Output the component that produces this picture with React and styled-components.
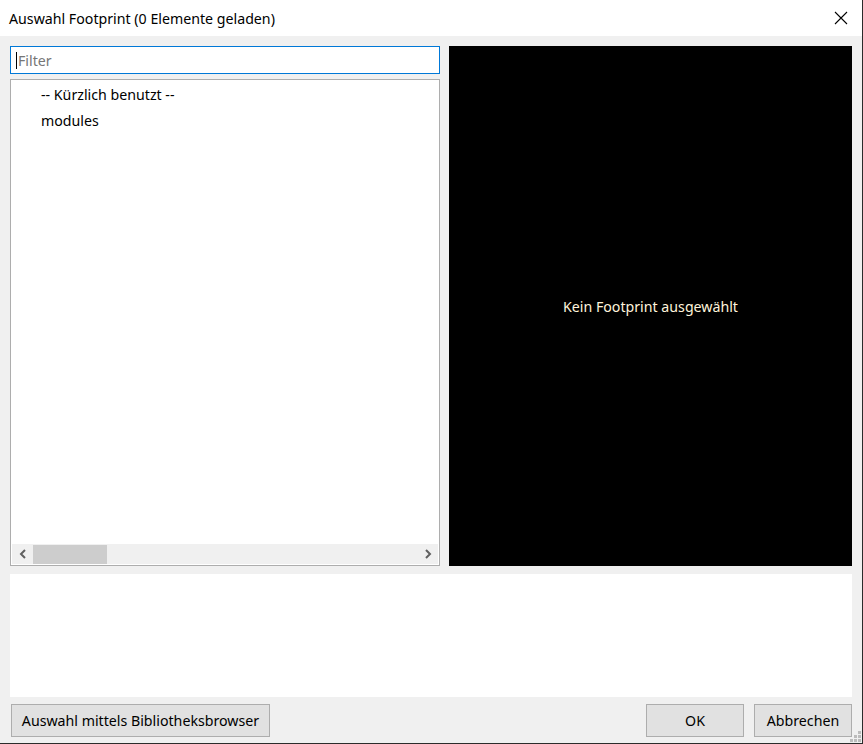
import React from 'react'
import styled, { createGlobalStyle } from 'styled-components'

const Global = createGlobalStyle`
  html, body {
    margin: 0;
    padding: 0;
    background: #f0f0f0;
  }
  * {
    box-sizing: border-box;
  }
`

const Window = styled.div`
  position: relative;
  width: 863px;
  height: 744px;
  display: flex;
  flex-direction: column;
  background: #f0f0f0;
  border-right: 1px solid #2b2b2b;
  border-bottom: 1px solid #2b2b2b;
  font-family: 'Noto Sans', 'Open Sans', sans-serif;
  font-size: 14.2px;
  color: #000;
  overflow: hidden;
`

const TitleBar = styled.div`
  height: 36px;
  flex: none;
  display: flex;
  align-items: center;
  justify-content: space-between;
  background: #fff;
  padding-left: 9px;
  padding-right: 14px;
`

const Title = styled.span`
  font-size: 14.2px;
`

const CloseButton = styled.button`
  border: 0;
  background: transparent;
  padding: 0;
  width: 14px;
  height: 14px;
  display: flex;
  align-items: center;
  justify-content: center;
`

const Body = styled.div`
  flex: 1;
  display: flex;
  flex-direction: column;
  padding: 10px 10px 6px 10px;
`

const TopRow = styled.div`
  height: 520px;
  display: flex;
  gap: 9px;
`

const LeftColumn = styled.div`
  width: 430px;
  display: flex;
  flex-direction: column;
  gap: 5px;
`

const FilterInput = styled.div`
  height: 28px;
  border: 1px solid #0078d7;
  background: #fff;
  display: flex;
  align-items: center;
  padding-left: 5px;
  color: #767676;
`

const Caret = styled.span`
  width: 1px;
  height: 17px;
  background: #000;
  margin-right: 1px;
`

const Tree = styled.div`
  flex: 1;
  border: 1px solid #adadad;
  background: #fff;
  display: flex;
  flex-direction: column;
`

const TreeItems = styled.div`
  flex: 1;
  padding-top: 2px;
`

const TreeItem = styled.div`
  height: 26px;
  line-height: 26px;
  padding-left: 30px;
  white-space: nowrap;
`

const HScroll = styled.div`
  height: 20px;
  margin: 0 1px 1px 1px;
  background: #f0f0f0;
  display: flex;
  align-items: center;
`

const ScrollArrow = styled.div`
  width: 21px;
  height: 20px;
  display: flex;
  align-items: center;
  justify-content: center;
`

const ScrollTrack = styled.div`
  flex: 1;
  height: 20px;
  display: flex;
  align-items: center;
`

const ScrollThumb = styled.div`
  width: ${p => p.$w}px;
  height: 19px;
  background: #cdcdcd;
`

const Preview = styled.div`
  flex: 1;
  background: #000;
  display: flex;
  align-items: center;
  justify-content: center;
  color: #fff4dc;
`

const Description = styled.div`
  height: 123px;
  margin-top: 8px;
  background: #fff;
`

const ButtonRow = styled.div`
  margin-top: 7px;
  display: flex;
  align-items: center;
  padding-left: 1px;
`

const Button = styled.button`
  height: 33px;
  width: ${p => p.$w}px;
  padding: 0;
  background: #e1e1e1;
  border: 1px solid #adadad;
  font-family: inherit;
  font-size: 14.2px;
  color: #000;
  white-space: nowrap;
  margin-left: ${p => p.$ml || 0}px;
`

const Spacer = styled.div`
  flex: 1;
`

const Grip = styled.svg`
  position: absolute;
  right: 1px;
  bottom: 1px;
`

const Chevron = ({ dir }) => (
  <svg width='8' height='10' viewBox='0 0 8 10'>
    <path
      d={dir === 'left' ? 'M6 1 L2 5 L6 9' : 'M2 1 L6 5 L2 9'}
      stroke='#606060'
      strokeWidth='2'
      fill='none'
    />
  </svg>
)

export default function App () {
  const dots = [[8, 0], [4, 4], [8, 4], [0, 8], [4, 8], [8, 8]]
  return (
    <>
      <Global />
      <Window>
        <TitleBar>
          <Title>Auswahl Footprint (0 Elemente geladen)</Title>
          <CloseButton>
            <svg width='14' height='14' viewBox='0 0 14 14'>
              <path d='M1 1 L13 13 M13 1 L1 13' stroke='#000' strokeWidth='1.1' />
            </svg>
          </CloseButton>
        </TitleBar>
        <Body>
          <TopRow>
            <LeftColumn>
              <FilterInput>
                <Caret />
                Filter
              </FilterInput>
              <Tree>
                <TreeItems>
                  <TreeItem>-- Kürzlich benutzt --</TreeItem>
                  <TreeItem>modules</TreeItem>
                </TreeItems>
                <HScroll>
                  <ScrollArrow><Chevron dir='left' /></ScrollArrow>
                  <ScrollTrack>
                    <ScrollThumb $w={74} />
                  </ScrollTrack>
                  <ScrollArrow><Chevron dir='right' /></ScrollArrow>
                </HScroll>
              </Tree>
            </LeftColumn>
            <Preview>Kein Footprint ausgewählt</Preview>
          </TopRow>
          <Description />
          <ButtonRow>
            <Button $w={259}>Auswahl mittels Bibliotheksbrowser</Button>
            <Spacer />
            <Button $w={98}>OK</Button>
            <Button $w={98} $ml={10}>Abbrechen</Button>
          </ButtonRow>
        </Body>
        <Grip width='11' height='11' viewBox='0 0 11 11'>
          {dots.map(([x, y]) => (
            <rect key={x + '-' + y} x={x} y={y} width='3' height='3' fill='#bcbcbc' />
          ))}
        </Grip>
      </Window>
    </>
  )
}
